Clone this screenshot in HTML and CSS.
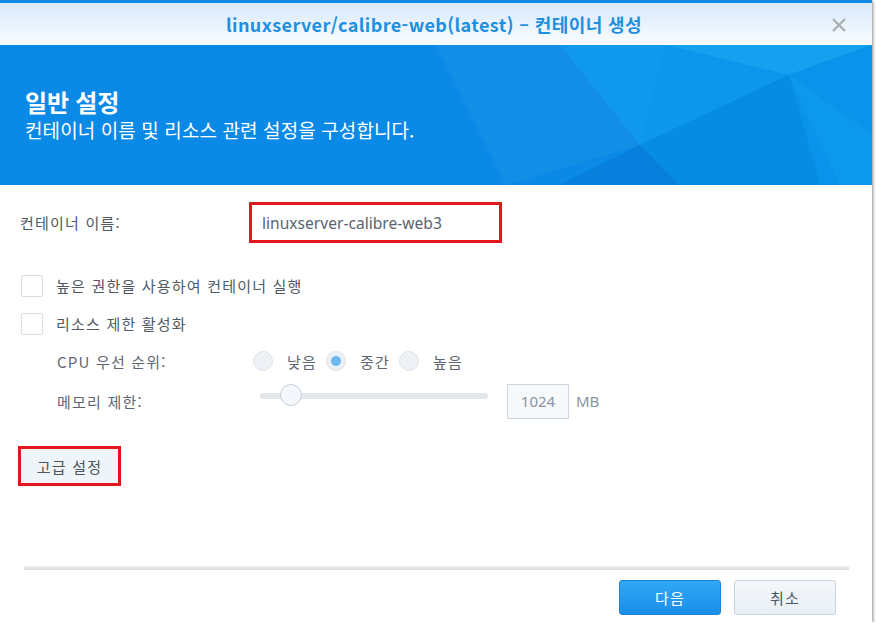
FILE: index.html
```html
<!DOCTYPE html>
<html lang="ko">
<head>
  <meta charset="UTF-8" />
  <title>컨테이너 생성</title>
  <link rel="stylesheet" href="styles.css">
</head>
<body>

<div class="dialog">
  <div class="titlebar">
    <span class="title">linuxserver/calibre-web(latest) – 컨테이너 생성</span>
    <svg class="close" width="14" height="14" viewBox="0 0 14 14">
      <path d="M1 1 L13 13 M13 1 L1 13" stroke="#a8adb2" stroke-width="2.2" />
    </svg>
  </div>

  <!-- Banner -->
  <div class="banner">
    <svg class="banner-bg" width="872" height="140" viewBox="0 0 872 140" preserveAspectRatio="none">
      <polygon points="436,0 665,0 640,100 506,140" fill="#ffffff" opacity="0.04" />
      <polygon points="560,0 665,0 789,30 640,100" fill="#0fa0f0" opacity="0.55" />
      <polygon points="665,0 789,30 872,0" fill="#19aaf4" opacity="0.7" />
      <polygon points="789,30 872,0 872,140 820,140" fill="#0a93ea" opacity="0.9" />
      <polygon points="640,100 789,30 820,140 679,140" fill="#078ce3" />
      <polygon points="640,100 679,140 559,140" fill="#0680dc" />
      <polygon points="789,30 872,90 872,140 840,140" fill="#0e9cee" opacity="0.6" />
    </svg>
    <div class="banner-text">
      <h1>일반 설정</h1>
      <p>컨테이너 이름 및 리소스 관련 설정을 구성합니다.</p>
    </div>
  </div>

  <div class="content">
    <div class="name-row">
      <span class="label">컨테이너 이름:</span>
      <div class="mark name-field">linuxserver-calibre-web3</div>
    </div>

    <div class="check-row first">
      <span class="checkbox"></span>
      <span class="label">높은 권한을 사용하여 컨테이너 실행</span>
    </div>
    <div class="check-row">
      <span class="checkbox"></span>
      <span class="label">리소스 제한 활성화</span>
    </div>

    <div class="sub-row cpu">
      <span class="label dim">CPU 우선 순위:</span>
      <div class="radios">
        <span class="radio"></span><span class="dim">낮음</span>
        <span class="radio checked"></span><span class="dim">중간</span>
        <span class="radio"></span><span class="dim">높음</span>
      </div>
    </div>
    <div class="sub-row">
      <span class="label dim">메모리 제한:</span>
      <div class="memory">
        <div class="slider"><span class="thumb"></span></div>
        <div class="mem-box">1024</div>
        <span class="unit">MB</span>
      </div>
    </div>

    <div class="mark adv">
      <button class="adv-btn">고급 설정</button>
    </div>
  </div>

  <div class="footer">
    <div class="divider"></div>
    <div class="actions">
      <button class="btn primary">다음</button>
      <button class="btn">취소</button>
    </div>
  </div>
</div>

</body>
</html>
```

FILE: styles.css
```css
body, html {
  margin: 0;
  padding: 0;
  background: #fff;
  font-family: "Noto Sans", "Noto Sans CJK KR", sans-serif;
}

.dialog {
  width: 872px;
  height: 619px;
  border-top: 3px solid #0b89e3;
  background: #fff;
  box-shadow: 1px 1px 3px rgba(0, 0, 0, 0.45);
  display: flex;
  flex-direction: column;
}

.titlebar {
  height: 42px;
  background: linear-gradient(#d6e9f9, #fbfdff);
  display: flex;
  align-items: center;
  justify-content: center;
  position: relative;
}

.title {
  color: #1f8fe0;
  font-family: "Noto Sans CJK KR", sans-serif;
  font-weight: bold;
  font-size: 18px;
  letter-spacing: 0.4px;
  margin-left: -4px;
}

.close {
  position: absolute;
  right: 26px;
  top: 15px;
}

.banner {
  height: 140px;
  background: #0a8ae6;
  position: relative;
  overflow: hidden;
}

.banner-bg {
  position: absolute;
  left: 0;
  top: 0;
}

.banner-text {
  position: relative;
  padding: 41px 0 0 25px;
  color: #fff;
  font-family: "Noto Sans CJK KR", sans-serif;
}

.banner-text h1 {
  margin: 0;
  font-size: 24px;
  line-height: 31px;
  font-weight: bold;
  letter-spacing: -0.2px;
}

.banner-text p {
  margin: 0;
  font-size: 19px;
  line-height: 25px;
  letter-spacing: 0.1px;
}

.content {
  flex: 1;
  padding: 17px 0 0 0;
  font-size: 14px;
  color: #4f5964;
}

.label {
  font-family: "Noto Sans CJK KR", sans-serif;
  font-size: 15px;
  letter-spacing: 1.2px;
}

.dim {
  color: #5d6671;
}

.name-row {
  display: grid;
  grid-template-columns: 229px auto;
  align-items: center;
  padding-left: 20px;
}

.mark {
  border: 3px solid #e3151d;
  box-sizing: border-box;
}

.name-field {
  width: 253px;
  height: 41px;
  padding-left: 10px;
  display: flex;
  align-items: center;
  font-size: 15.6px;
  color: #5a6470;
}

.check-row {
  display: flex;
  align-items: center;
  gap: 13px;
  padding-left: 21px;
  margin-top: 15px;
  height: 23px;
}

.check-row.first {
  margin-top: 31px;
}

.checkbox {
  width: 20px;
  height: 20px;
  border: 1px solid #d5dde6;
  border-radius: 2px;
  background: #fff;
}

.sub-row {
  display: grid;
  grid-template-columns: 196px auto;
  align-items: center;
  padding-left: 57px;
  height: 40px;
}

.sub-row.cpu {
  margin-top: 6px;
}

.radios {
  display: flex;
  align-items: center;
  font-family: "Noto Sans CJK KR", sans-serif;
  font-size: 15px;
  letter-spacing: 1.2px;
}

.radio {
  width: 20px;
  height: 20px;
  box-sizing: border-box;
  border: 1px solid #dde3ea;
  border-radius: 50%;
  background: #edf1f5;
  margin-right: 14px;
  position: relative;
}

.radios .dim {
  margin-right: 9px;
}

.radio.checked::after {
  content: "";
  position: absolute;
  left: 4px;
  top: 4px;
  width: 10px;
  height: 10px;
  border-radius: 50%;
  background: #6cb7ef;
}

.memory {
  display: flex;
  align-items: center;
  margin-left: 7px;
}

.slider {
  width: 228px;
  height: 6px;
  border-radius: 3px;
  background: #e2e7ec;
  position: relative;
  margin-top: -10px;
}

.thumb {
  position: absolute;
  left: 20px;
  top: -9px;
  width: 22px;
  height: 22px;
  box-sizing: border-box;
  border-radius: 50%;
  border: 1px solid #c5d0da;
  background: #f4f8fc;
}

.mem-box {
  width: 62px;
  height: 35px;
  box-sizing: border-box;
  border: 1px solid #cbd5df;
  background: #f6f8fa;
  margin-left: 19px;
  display: flex;
  align-items: center;
  justify-content: center;
  font-size: 15px;
  color: #8a95a1;
}

.unit {
  margin-left: 7px;
  color: #8a95a1;
  font-size: 15px;
}

.adv {
  width: 103px;
  height: 40px;
  margin: 25px 0 0 18px;
}

.adv-btn {
  width: 100%;
  height: 100%;
  border: none;
  background: #eff4f9;
  font-family: "Noto Sans CJK KR", sans-serif;
  font-size: 15px;
  letter-spacing: 1.2px;
  color: #4a5560;
}

.footer {
  height: 56px;
}

.divider {
  margin: 0 23px 0 24px;
  height: 4px;
  background: linear-gradient(#f2f2f2, #d9d9d9);
}

.actions {
  display: flex;
  justify-content: flex-end;
  gap: 13px;
  padding: 10px 36px 0 0;
}

.btn {
  width: 102px;
  height: 35px;
  border-radius: 3px;
  border: 1px solid #c8d2dc;
  background: linear-gradient(#f4f7fa, #e9eff5);
  font-family: "Noto Sans CJK KR", sans-serif;
  font-size: 15px;
  letter-spacing: 1.2px;
  color: #4a5560;
}

.btn.primary {
  border-color: #1b84d8;
  background: linear-gradient(#30a8f7, #1a8ee8);
  color: #fff;
}
```
